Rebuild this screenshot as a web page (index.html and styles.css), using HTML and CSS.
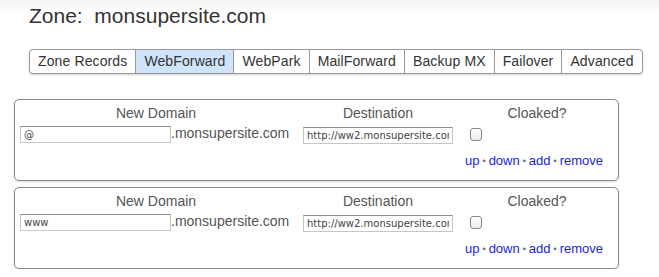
FILE: index.html
```html
<!DOCTYPE html>
<html>
<head>
<meta charset="utf-8">
<link rel="stylesheet" href="styles.css">
</head>
<body>
<div class="page">
  <h1 class="title">Zone:&nbsp; monsupersite.com</h1>
  <nav class="tabs">
    <a class="tab">Zone Records</a>
    <a class="tab active">WebForward</a>
    <a class="tab">WebPark</a>
    <a class="tab">MailForward</a>
    <a class="tab">Backup MX</a>
    <a class="tab">Failover</a>
    <a class="tab">Advanced</a>
  </nav>
  <div class="panels">
    <div class="panel">
      <div class="head">New Domain</div>
      <div class="head">Destination</div>
      <div class="head">Cloaked?</div>
      <div class="domain"><input class="field sub" type="text" value="@"><span class="suffix">.monsupersite.com</span></div>
      <div><input class="field dest" type="text" value="http://ww2.monsupersite.com"></div>
      <div class="cloak"><input class="check" type="checkbox"></div>
      <div></div><div></div>
      <div class="links"><a href="#">up</a><span class="dot">•</span><a href="#">down</a><span class="dot">•</span><a href="#">add</a><span class="dot">•</span><a href="#">remove</a></div>
    </div>
    <div class="panel">
      <div class="head">New Domain</div>
      <div class="head">Destination</div>
      <div class="head">Cloaked?</div>
      <div class="domain"><input class="field sub" type="text" value="www"><span class="suffix">.monsupersite.com</span></div>
      <div><input class="field dest" type="text" value="http://ww2.monsupersite.com"></div>
      <div class="cloak"><input class="check" type="checkbox"></div>
      <div></div><div></div>
      <div class="links"><a href="#">up</a><span class="dot">•</span><a href="#">down</a><span class="dot">•</span><a href="#">add</a><span class="dot">•</span><a href="#">remove</a></div>
    </div>
  </div>
</div>
</body>
</html>
```

FILE: styles.css
```css
html, body {
  margin: 0;
  padding: 0;
  background: #fff;
}
body {
  font-family: "Liberation Sans", Arial, sans-serif;
  color: #333;
  background: linear-gradient(#f4f4f4, #fff 12px);
}
.page {
  padding: 4px 0 0 14px;
  width: 640px;
}
.title {
  margin: 0 0 0 15px;
  font-size: 21px;
  font-weight: normal;
  line-height: 24px;
  color: #333;
}
.tabs {
  display: flex;
  margin: 21px 0 0 15px;
  width: max-content;
  border: 1px solid #999;
  border-radius: 4px;
  box-shadow: 0 1px 2px rgba(0,0,0,0.18);
  background: #fff;
  overflow: hidden;
}
.tab {
  font-size: 14px;
  line-height: 23px;
  padding: 0 8px 0 8px;
  letter-spacing: 0.12px;
  color: #333;
  border-left: 1px solid #999;
}
.tab:first-child {
  border-left: none;
}
.tab.active {
  background: #cfe4fa;
}
.panels {
  display: flex;
  flex-direction: column;
  gap: 6px;
  margin-top: 25px;
}
.panel {
  width: 590px;
  height: 72px;
  border: 1px solid #888;
  border-radius: 5px;
  box-shadow: 0 1px 2px rgba(0,0,0,0.15);
  padding: 5px 8px 3px 5px;
  display: grid;
  grid-template-columns: 272px 150px 146px;
  grid-template-rows: 17px 24px 22px;
  column-gap: 11px;
  row-gap: 3px;
  align-items: start;
}
.head {
  text-align: center;
  font-size: 14px;
  line-height: 17px;
  color: #555;
}
.domain {
  display: flex;
  align-items: center;
  height: 17px;
}
.field {
  box-sizing: border-box;
  height: 17px;
  margin: 1px 0 0 0;
  padding: 0 3px;
  border: 1px solid #c6c6c6;
  border-top-color: #8e8e8e;
  font-family: "DejaVu Sans", sans-serif;
  font-size: 10px;
  color: #444;
  background: #fff;
  outline: none;
}
.sub {
  width: 151px;
  flex: none;
}
.dest {
  width: 150px;
}
.suffix {
  font-size: 14px;
  color: #555;
  line-height: 17px;
  margin-left: 0;
}
.cloak {
  padding-left: 6px;
}
.check {
  -webkit-appearance: none;
  appearance: none;
  width: 12px;
  height: 13px;
  margin: 3px 0 0 0;
  border: 1px solid #8a8a8a;
  border-radius: 3px;
  background: linear-gradient(#fff, #e9e9e9);
}
.links {
  font-size: 13px;
  line-height: 18px;
  padding-left: 1px;
  white-space: nowrap;
}
.links a {
  color: #1a1ae8;
  text-decoration: none;
}
.dot {
  color: #666;
  font-size: 9px;
  margin: 0 3px;
  vertical-align: 1px;
}
```
